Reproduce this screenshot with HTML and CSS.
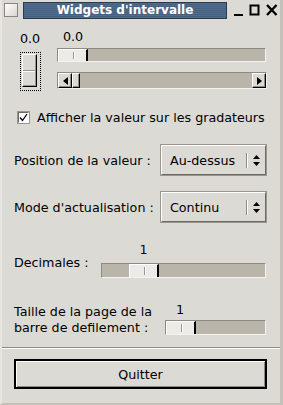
FILE: index.html
```html
<!DOCTYPE html>
<html lang="fr">

<head>
    <meta charset="UTF-8">
    <title>Widgets d'intervalle</title>
    <link rel="stylesheet" href="styles.css">
</head>

<body>
    <div class="window">
        <div class="titlebar">
            <div class="win-icon"></div>
            <div class="win-title">Widgets d'intervalle</div>
            <div class="win-buttons">
                <svg width="11" height="14" viewBox="0 0 11 14"><rect x="1" y="11" width="9" height="2" fill="#000"/></svg>
                <svg width="12" height="14" viewBox="0 0 12 14"><rect x="1.5" y="2.5" width="8" height="9" fill="none" stroke="#000" stroke-width="2"/></svg>
                <svg width="12" height="14" viewBox="0 0 12 14"><path d="M1 2 L10.5 12 M10.5 2 L1 12" stroke="#000" stroke-width="2.4"/></svg>
            </div>
        </div>

        <div class="content">
            <div class="scales">
                <div class="vscale-col">
                    <div class="value">0.0</div>
                    <div class="vscale">
                        <div class="vknob"></div>
                    </div>
                </div>
                <div class="hscale-col">
                    <div class="value-line"><span class="value knob-value">0.0</span></div>
                    <div class="trough">
                        <div class="knob"></div>
                    </div>
                    <div class="scrollbar">
                        <div class="sb-btn"><span class="arrow-left"></span></div>
                        <div class="sb-thumb"></div>
                        <div class="sb-space"></div>
                        <div class="sb-btn"><span class="arrow-right"></span></div>
                    </div>
                </div>
            </div>

            <div class="check-row">
                <span class="checkbox">
                    <svg width="9" height="9" viewBox="0 0 9 9"><path d="M1 4.5 L3.5 7.5 L8 1" fill="none" stroke="#000" stroke-width="1.3"/></svg>
                </span>
                <span>Afficher la valeur sur les gradateurs</span>
            </div>

            <div class="row row-select">
                <span class="label">Position de la valeur :</span>
                <div class="select">
                    <span class="select-text">Au-dessus</span>
                    <span class="select-sep"></span>
                    <span class="updown">
                        <svg width="7" height="11" viewBox="0 0 7 11"><path d="M3.5 0 L7 4 L0 4 Z M0 7 L7 7 L3.5 11 Z" fill="#000"/></svg>
                    </span>
                </div>
            </div>

            <div class="row row-select row-mode">
                <span class="label">Mode d'actualisation :</span>
                <div class="select">
                    <span class="select-text">Continu</span>
                    <span class="select-sep"></span>
                    <span class="updown">
                        <svg width="7" height="11" viewBox="0 0 7 11"><path d="M3.5 0 L7 4 L0 4 Z M0 7 L7 7 L3.5 11 Z" fill="#000"/></svg>
                    </span>
                </div>
            </div>

            <div class="row row-scale row-dec">
                <span class="label">Decimales :</span>
                <div class="scale-wrap dec-wrap">
                    <div class="value-line dec-offset"><span class="value knob-value">1</span></div>
                    <div class="trough">
                        <div class="knob dec-offset"></div>
                    </div>
                </div>
            </div>

            <div class="row row-scale row-page">
                <span class="label">Taille de la page de la<br>barre de defilement :</span>
                <div class="scale-wrap page-wrap">
                    <div class="value-line page-value"><span class="value knob-value">1</span></div>
                    <div class="trough">
                        <div class="knob"></div>
                    </div>
                </div>
            </div>
        </div>

        <div class="separator"></div>

        <div class="bottom">
            <button class="quit">Quitter</button>
        </div>
    </div>
</body>

</html>
```

FILE: styles.css
```css
body {
    margin: 0;
    padding: 0;
    background: #dcdad5;
    font-family: "DejaVu Sans", sans-serif;
    font-size: 12.7px;
    color: #000;
}

.window {
    width: 283px;
    height: 405px;
    box-sizing: border-box;
    border-left: 2px solid #e8e6e2;
    border-right: 3px solid #c4c1ba;
    border-bottom: 2px solid #c4c1ba;
    background: #dcdad5;
    overflow: hidden;
}

/* title bar */
.titlebar {
    height: 20px;
    display: flex;
    align-items: center;
    padding: 0 0 0 2px;
}

.win-icon {
    width: 12px;
    height: 12px;
    border: 1px solid #8a857b;
    background: linear-gradient(135deg, #ffffff, #d8d6d0);
    margin-right: 5px;
}

.win-title {
    width: 202px;
    height: 15px;
    border: 1px solid #2a3a4e;
    background: repeating-linear-gradient(#506d8f 0, #506d8f 1px, #46617f 1px, #46617f 2px);
    color: #fff;
    font-weight: bold;
    font-size: 12px;
    text-align: center;
    line-height: 15px;
}

.win-buttons {
    display: flex;
    gap: 5px;
    margin-left: 6px;
    align-items: center;
}

/* content */
.content {
    padding: 0 13px 0 12px;
}

.value {
    line-height: 12px;
}

.value-line {
    display: flex;
    line-height: 12px;
}

.knob-value {
    width: 30px;
    text-align: center;
}

.scales {
    display: flex;
    margin-top: 11px;
}

.vscale-col {
    width: 32px;
    display: flex;
    flex-direction: column;
    align-items: center;
    padding-top: 2px;
}

.vscale {
    margin-top: 7px;
    width: 17px;
    height: 35px;
    border: 1px dotted #000;
    padding: 1px;
}

.vknob {
    height: 31px;
    width: 13px;
    border: 1px solid;
    border-color: #fff #000 #000 #fff;
    background: linear-gradient(#dcdad5 15px, #9a968e 15px, #9a968e 16px, #fff 16px, #fff 17px, #dcdad5 17px);
    box-shadow: inset -1px -1px 0 #9a968e;
}

.hscale-col {
    flex: 1;
    margin-left: 11px;
}

.hscale-col .value-line {
    padding-left: 1px;
}

.trough {
    height: 12px;
    background: #bab5ab;
    border: 1px solid;
    border-color: #8f8b83 #f4f3f0 #f4f3f0 #8f8b83;
    display: flex;
}

.hscale-col .trough {
    margin-top: 5px;
    margin-right: 1px;
}

.knob {
    width: 30px;
    box-sizing: border-box;
    border-top: 1px solid #fff;
    border-left: 1px solid #fff;
    border-right: 2px solid #000;
    background: #ecebe7;
    position: relative;
}

.knob::after {
    content: "";
    position: absolute;
    left: 50%;
    top: 2px;
    bottom: 2px;
    border-left: 1px solid #9a968e;
    border-right: 1px solid #fff;
}

.scrollbar {
    margin-top: 10px;
    height: 15px;
    display: flex;
    background: #bab5ab;
    border: 1px solid;
    border-color: #8f8b83 #f4f3f0 #f4f3f0 #8f8b83;
}

.sb-btn,
.sb-thumb {
    box-sizing: border-box;
    background: #dcdad5;
    border: 1px solid;
    border-color: #fff #000 #000 #fff;
    box-shadow: inset -1px -1px 0 #8f8b83;
}

.sb-btn {
    width: 14px;
    display: flex;
    align-items: center;
    justify-content: center;
}

.sb-thumb {
    width: 8px;
}

.sb-space {
    flex: 1;
}

.arrow-left {
    border-right: 5px solid #000;
    border-top: 4px solid transparent;
    border-bottom: 4px solid transparent;
}

.arrow-right {
    border-left: 5px solid #000;
    border-top: 4px solid transparent;
    border-bottom: 4px solid transparent;
}

/* check row */
.check-row {
    display: flex;
    align-items: center;
    margin-top: 19px;
    margin-left: 4px;
    gap: 8px;
    white-space: nowrap;
}

.checkbox {
    flex: none;
    width: 9px;
    height: 9px;
    background: #fff;
    border: 1px solid;
    border-color: #6d6a64 #fff #fff #6d6a64;
    box-shadow: 0 0 0 1px #9a968e;
    display: flex;
    align-items: center;
    justify-content: center;
}

/* form rows */
.row {
    display: flex;
    align-items: center;
    white-space: nowrap;
}

.row-select {
    margin-top: 20px;
    justify-content: space-between;
}

.row-mode {
    margin-top: 17px;
}

.select {
    width: 103px;
    height: 28px;
    border: 1px solid;
    border-color: #fff #6d6a64 #6d6a64 #fff;
    box-shadow: 0 0 0 1px #9a968e;
    display: flex;
    align-items: center;
    margin-right: 1px;
}

.select-text {
    flex: 1;
    padding-left: 8px;
}

.select-sep {
    width: 1px;
    height: 15px;
    background: #8f8b83;
    border-right: 1px solid #fff;
}

.updown {
    width: 17px;
    display: flex;
    justify-content: center;
}

.row-scale {
    align-items: flex-end;
}

.row-dec {
    margin-top: 22px;
}

.row-dec .label {
    padding-bottom: 8px;
}

.row-dec .trough,
.row-page .trough {
    height: 13px;
}

.scale-wrap {
    display: flex;
    flex-direction: column;
    margin-right: 1px;
}

.dec-wrap {
    margin-left: 13px;
    flex: 1;
}

.dec-offset {
    margin-left: 27px;
}

.row-dec .value-line {
    margin-bottom: 7px;
}

.row-page {
    margin-top: 26px;
}

.row-page .label {
    line-height: 16px;
}

.page-wrap {
    margin-left: auto;
    width: 101px;
    margin-bottom: 1px;
}

.page-value {
    margin-bottom: 4px;
}

.separator {
    margin-top: 11px;
    border-top: 1px solid #8f8b83;
    border-bottom: 1px solid #fff;
}

.bottom {
    padding: 10px 13px 0 12px;
}

.quit {
    width: 100%;
    height: 30px;
    font: inherit;
    color: #000;
    background: #dcdad5;
    border: 2px solid #000;
    box-shadow: inset 1px 1px 0 #fff, inset -1px -1px 0 #8f8b83;
    padding: 0;
}
```
